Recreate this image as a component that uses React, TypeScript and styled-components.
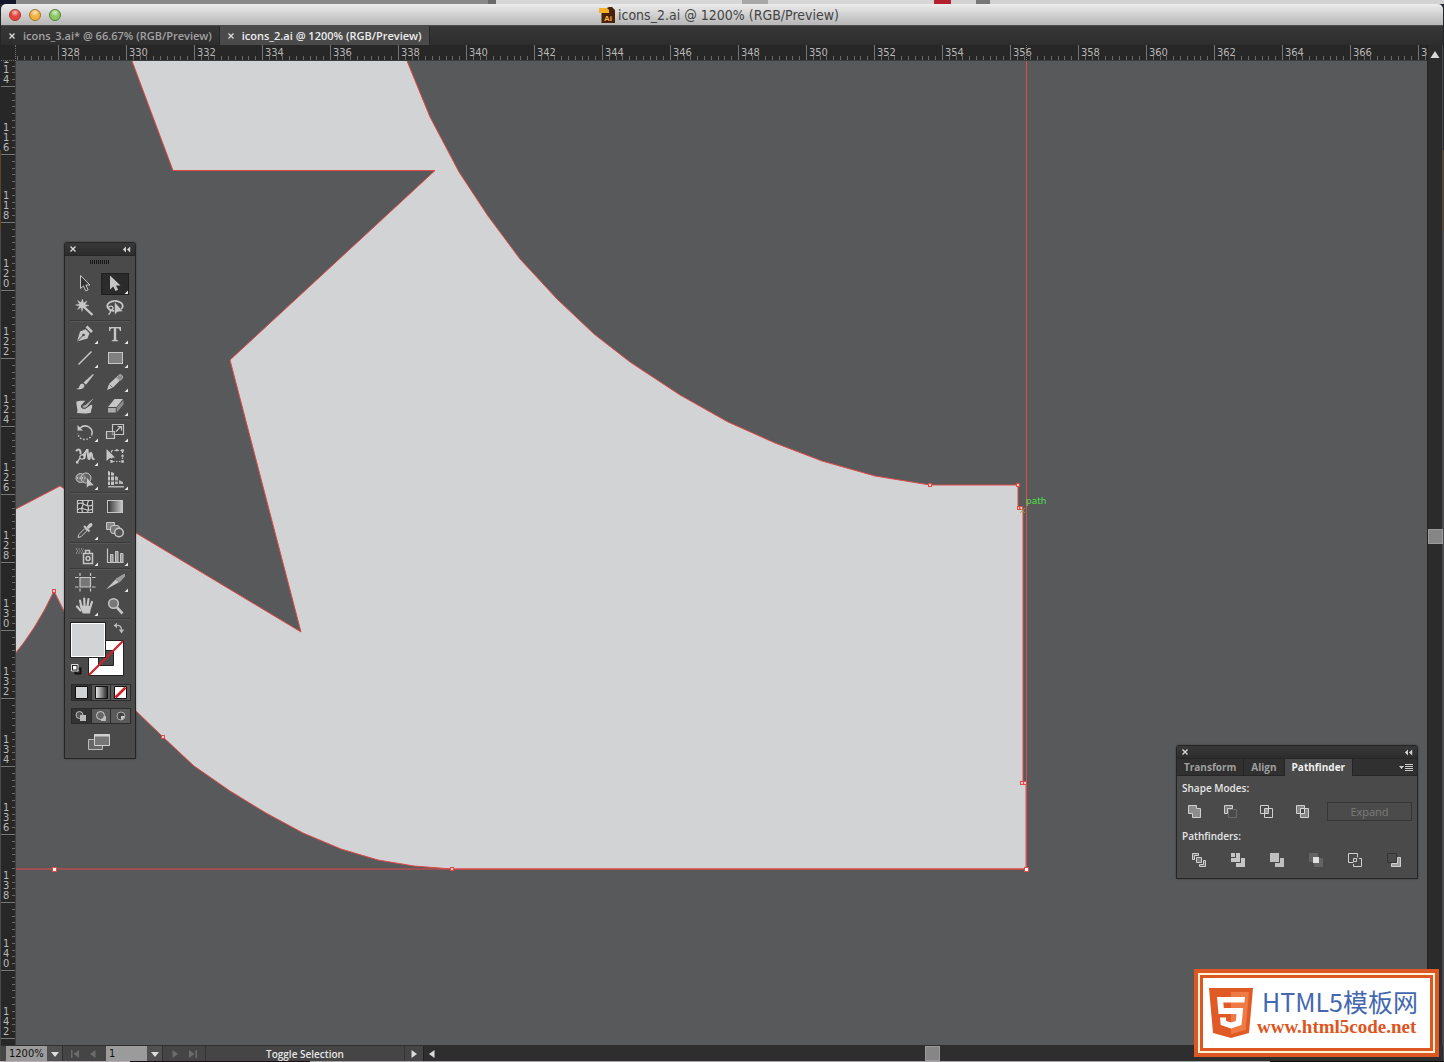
import React from "react";
import styled, { createGlobalStyle, css } from "styled-components";

const uiFont = `"Open Sans", "Noto Sans", sans-serif`;
const rulerFont = `"DejaVu Sans Condensed", "DejaVu Sans", sans-serif`;
const lineRed = "#e04a48";

const GlobalStyle = createGlobalStyle`
  *, *::before, *::after { box-sizing: border-box; }
  html, body { margin: 0; height: 100%; overflow: hidden; }
  body { font-family: ${uiFont}; background: #141416; }
  #root { height: 100%; }
  button, input { font: inherit; margin: 0; }
  svg { display: block; }
`;

/* ---------- window shell ---------- */

const Desktop = styled.div`
  position: relative;
  display: flex;
  flex-direction: column;
  height: 100vh;
  min-height: 800px;
  padding: 0 1px;
  background: linear-gradient(#23262e 0 150px, #5c4322 150px 230px, #4a4a4c 230px);
`;

const BackdropTop = styled.div`
  display: flex;
  flex: none;
  height: 4px;
  margin: 0 -1px;
  background: #d2d2d2;
`;

const BackdropPart = styled.div<{ $w: number; $c: string }>`
  width: ${(p) => p.$w}px;
  background: ${(p) => p.$c};
`;

const BackdropBottom = styled.div`
  flex: none;
  height: 1px;
  margin: 0 -1px;
  background: linear-gradient(90deg, #b8b0b4 0 130px, #1a0d14 130px 310px, #a8a4a8 310px 1270px, #0c0a0a 1270px);
`;

const AppWindow = styled.main`
  flex: 1;
  min-height: 0;
  display: flex;
  flex-direction: column;
  border-radius: 5px 5px 0 0;
  overflow: hidden;
  background: #2a2a2a;
`;

const TitleBar = styled.header`
  position: relative;
  flex: none;
  display: flex;
  align-items: center;
  justify-content: center;
  height: 22px;
  padding-right: 6px;
  background: linear-gradient(#ececec, #b6b6b6);
  border-bottom: 1px solid #4c4c4c;
`;

const Lights = styled.div`
  position: absolute;
  left: 8px;
  top: 5px;
  display: flex;
  gap: 8px;
`;

const Light = styled.button<{ $c: string; $edge: string }>`
  width: 12px;
  height: 12px;
  padding: 0;
  border: 1px solid ${(p) => p.$edge};
  border-radius: 50%;
  background: radial-gradient(circle at 50% 25%, #fff8 0 1px, transparent 4px), ${(p) => p.$c};
`;

const WindowTitle = styled.h1`
  display: flex;
  align-items: center;
  gap: 3px;
  margin: 0;
  font: 400 14px/20px ${rulerFont};
  color: #444;
`;

const TabBar = styled.nav`
  flex: none;
  display: flex;
  height: 19px;
  background: linear-gradient(#373737, #2d2d2d);
`;

const DocTab = styled.div<{ $active?: boolean }>`
  display: flex;
  align-items: center;
  gap: 7px;
  padding: 0 7px;
  border-right: 1px solid #262626;
  color: ${(p) => (p.$active ? "#ececec" : "#a2a2a2")};
  background: ${(p) => (p.$active ? "#4a4a4a" : "transparent")};
`;

const TabName = styled.button`
  padding: 0;
  border: 0;
  background: none;
  color: inherit;
  font: 600 11px/18px ${uiFont};
  white-space: nowrap;
`;

const GlyphButton = styled.button`
  display: grid;
  place-items: center;
  padding: 0;
  border: 0;
  background: none;
  color: #d8d8d8;
`;

const Workspace = styled.div`
  flex: 1;
  min-height: 0;
  display: grid;
  grid-template-columns: 15px minmax(0, 1fr) 16px;
  grid-template-rows: 16px minmax(0, 1fr);
`;

/* ---------- rulers ---------- */

const rulerText = css`
  font-family: ${rulerFont};
  font-size: 11px;
  color: #b9b9b9;
`;

const Corner = styled.div`
  border-right: 1px dotted #707070;
  border-bottom: 1px dotted #707070;
  background: #262626;
`;

const RulerTop = styled.div`
  position: relative;
  display: flex;
  overflow: hidden;
  background: #272727;
  border-bottom: 1px solid #3c3c3c;
`;

const TopCell = styled.div`
  flex: none;
  width: 68px;
  display: flex;
  flex-direction: column;
  justify-content: space-between;
  border-left: 1px solid #767676;
  &:first-child { margin-left: -26px; }
`;

const TopLabel = styled.span`
  ${rulerText}
  padding-left: 2px;
  line-height: 15px;
  height: 11px;
`;

const TopTicks = styled.div`
  display: flex;
  height: 4px;
`;

const TopTick = styled.i`
  flex: 1;
  &:not(:first-child) { border-left: 1px solid #696969; }
`;

const CursorMark = styled.i`
  position: absolute;
  left: 1010px;
  top: 0;
  height: 100%;
  border-left: 1px dotted #777;
`;

const RulerLeft = styled.div`
  display: flex;
  flex-direction: column;
  overflow: hidden;
  background: #272727;
  border-right: 1px solid #3c3c3c;
`;

const LeftCell = styled.div`
  flex: none;
  height: 68px;
  display: flex;
  justify-content: space-between;
  border-bottom: 1px solid #767676;
  &:first-child { margin-top: -42px; }
`;

const LeftLabel = styled.span`
  ${rulerText}
  display: flex;
  flex-direction: column;
  justify-content: flex-end;
  padding: 0 0 1px 2px;
  line-height: 10px;
`;

const LeftTicks = styled.div`
  display: flex;
  flex-direction: column;
  width: 3px;
`;

const LeftTick = styled.i`
  flex: 1;
  &:not(:last-child) { border-bottom: 1px solid #696969; }
`;

/* ---------- scroll bars and canvas ---------- */

const ScrollColumn = styled.div`
  grid-column: 3;
  grid-row: 1 / 3;
  display: flex;
  flex-direction: column;
  align-items: center;
  padding-top: 5px;
  background: #2b2b2b;
  border-left: 1px solid #222;
  border-right: 1px solid #4a4a4a;
`;

const Spacer = styled.i<{ $grow: number }>`
  flex: ${(p) => p.$grow} 1 0;
`;

const Thumb = styled.div`
  flex: none;
  width: 15px;
  height: 15px;
  background: #868686;
  border: 1px solid #9a9a9a;
`;

const Artboard = styled.svg`
  width: 100%;
  height: 100%;
  background: #58595b;
`;

/* ---------- status bar ---------- */

const StatusBar = styled.footer`
  flex: none;
  display: flex;
  height: 16px;
  padding-left: 5px;
  background: #454545;
  border-top: 1px solid #303030;
  color: #e4e4e4;
  font: 600 10px/16px ${uiFont};
`;

const Field = styled.input`
  width: 41px;
  padding: 0 3px;
  border: 0;
  background: #9b9b9b;
  color: #101010;
  font: 400 11px/15px ${rulerFont};
`;

const BarButton = styled(GlyphButton)<{ $w: number; $dim?: boolean }>`
  width: ${(p) => p.$w}px;
  color: ${(p) => (p.$dim ? "#6c6c6c" : "#dcdcdc")};
`;

const DropButton = styled(BarButton)`
  background: #505050;
  border-right: 1px solid #303030;
  margin-right: 3px;
`;

const PageControls = styled.div`
  display: flex;
  margin-left: 4px;
`;

const StatusText = styled.output`
  width: 200px;
  margin-left: 3px;
  border-left: 1px solid #333;
  border-right: 1px solid #333;
  text-align: center;
`;

const ScrollRow = styled.div`
  flex: 1;
  display: flex;
  align-items: center;
  padding-right: 16px;
  background: #2e2e2e;
  border-left: 1px solid #222;
`;

/* ---------- floating panels ---------- */

const Panel = styled.section`
  position: absolute;
  border: 1px solid #242424;
  border-radius: 3px 3px 0 0;
  background: #4a4a4a;
  box-shadow: 0 0 2px #0006;
`;

const PanelHead = styled.div`
  display: flex;
  align-items: center;
  justify-content: space-between;
  height: 13px;
  padding: 0 4px;
  background: linear-gradient(#383838, #2c2c2c);
  border-bottom: 1px solid #262626;
`;

const ToolPanel = styled(Panel)`
  left: 64px;
  top: 242px;
  width: 72px;
`;

const Grip = styled.div`
  height: 16px;
  padding-top: 4px;
  display: flex;
  justify-content: center;
  &::before {
    content: "";
    width: 20px;
    height: 4px;
    background: repeating-linear-gradient(90deg, #141414 0 1px, #4a4a4a 1px 2px);
  }
`;

const ToolGroup = styled.div`
  display: grid;
  grid-template-columns: 30px 30px;
  grid-auto-rows: 24px;
  place-items: center;
  margin: 0 5px 1px;
  border-bottom: 1px solid #3a3a3a;
  box-shadow: 0 1px 0 #565656;
`;

const ToolButton = styled.button<{ $on?: boolean }>`
  width: 28px;
  height: 22px;
  padding: 0;
  border: 0;
  background: ${(p) => (p.$on ? "#2b2b2b" : "none")};
  box-shadow: ${(p) => (p.$on ? "inset 0 0 0 1px #1f1f1f" : "none")};
  color: #c2c2c2;
`;

const SwatchArea = styled.div`
  position: relative;
  height: 64px;
`;

const FillSwatch = styled.button`
  position: absolute;
  left: 5px;
  top: 2px;
  width: 36px;
  height: 36px;
  border: 1px solid #222;
  background: #d1d3d4;
  box-shadow: inset 0 0 0 1px #fff;
`;

const StrokeSwatch = styled.button`
  position: absolute;
  left: 23px;
  top: 20px;
  padding: 0;
  border: 0;
  background: none;
`;

const SwapButton = styled(GlyphButton)`
  position: absolute;
  left: 48px;
  top: 2px;
`;

const DefaultButton = styled(GlyphButton)`
  position: absolute;
  left: 6px;
  top: 44px;
`;

const ModeRow = styled.div`
  display: flex;
  margin: 0 4px 7px 6px;
  border: 1px solid #2a2a2a;
`;

const ModeButton = styled.button<{ $on?: boolean; $plain?: boolean }>`
  flex: 1;
  display: grid;
  place-items: center;
  height: ${(p) => (p.$plain ? 14 : 15)}px;
  padding: 0;
  border: 0;
  background: ${(p) => (p.$on ? "#333" : "#5a5a5a")};
  & + & { border-left: 1px solid #2a2a2a; }
`;

const ScreenMode = styled(GlyphButton)`
  width: 100%;
  height: 27px;
  padding: 0 2px 4px 0;
`;

const PathPanel = styled(Panel)`
  right: 26px;
  top: 745px;
  width: 242px;
`;

const PanelTabs = styled.div`
  display: flex;
  align-items: stretch;
  height: 17px;
  background: #303030;
  border-bottom: 1px solid #262626;
`;

const PanelTab = styled.button<{ $on?: boolean }>`
  padding: 0 7px 1px;
  height: 17px;
  border: 0;
  border-right: 1px solid #242424;
  background: ${(p) => (p.$on ? "#4a4a4a" : "none")};
  color: ${(p) => (p.$on ? "#f0f0f0" : "#9f9f9f")};
  font: 700 10px/15px ${uiFont};
`;

const MenuButton = styled(GlyphButton)`
  margin-left: auto;
  padding-right: 4px;
`;

const PathBody = styled.div`
  padding: 5px 5px 1px;
`;

const PathTitle = styled.h2`
  margin: 0;
  font: 600 10px/14px ${uiFont};
  color: #e6e6e6;
`;

const ModeIcons = styled.div`
  display: flex;
  align-items: center;
  gap: 20px;
  height: 34px;
  padding: 0 0 2px 4px;
`;

const FinderIcons = styled(ModeIcons)`
  gap: 23px;
  padding: 0 0 0 9px;
`;

const PathButton = styled(GlyphButton)`
  width: 16px;
  height: 16px;
`;

const Expand = styled.button`
  flex: 1;
  height: 19px;
  margin-left: -3px;
  padding: 0;
  border: 1px solid #363636;
  background: #4b4b4b;
  color: #7b7b7b;
  font: 400 11px/15px ${uiFont};
`;

/* ---------- site badge ---------- */

const Badge = styled.aside`
  position: absolute;
  right: 5px;
  bottom: 5px;
  width: 245px;
  height: 88px;
  border: 4px solid #dc5722;
  background: #dc5722;
`;

const BadgeInner = styled.div`
  display: flex;
  align-items: center;
  gap: 4px;
  height: 100%;
  padding-left: 9px;
  border: 2px solid #fff3d8;
  background: #fff;
  box-shadow: inset 0 0 0 3px #dc5722;
`;

const BadgeText = styled.div`
  display: flex;
  flex-direction: column;
`;

const BadgeName = styled.strong`
  padding-left: 5px;
  font: 400 25px/27px "Noto Sans CJK SC", sans-serif;
  color: #4468b0;
`;

const BadgeLink = styled.a`
  font: 700 19px/24px "Liberation Serif", serif;
  color: #de5420;
  text-decoration: none;
`;

/* ---------- icons ---------- */

const Cross = () => (
  <svg width="8" height="8" viewBox="0 0 8 8" stroke="currentColor" strokeWidth="1.4">
    <path d="M1.5 1.5l5 5M6.5 1.5l-5 5" />
  </svg>
);

const Collapse = () => (
  <svg width="9" height="7" viewBox="0 0 9 7" fill="#d0d0d0">
    <path d="M4 .5v6L.8 3.5zM8.200 .5v6L5 3.500z" />
  </svg>
);

type Dir = "up" | "down" | "left" | "right" | "first" | "last";
const arrows: Record<Dir, string> = {
  up: "M5 1l4.500 7h-9z",
  down: "M1 3h8L5 8z",
  left: "M7.500 1v8L2 5z",
  right: "M2.500 1v8L8 5z",
  first: "M1 1h1.500v8H1zM9 1v8L3.500 5z",
  last: "M9 1H7.500v8H9zM1 1v8L6.500 5z",
};
const Arrow = ({ dir }: { dir: Dir }) => (
  <svg width="10" height="10" viewBox="0 0 10 10" fill="currentColor">
    <path d={arrows[dir]} />
  </svg>
);

const L = "#c6c6c6";
const line = { fill: "none", stroke: L, strokeWidth: 1.2 };

const toolGroups: { name: string; fly?: boolean; on?: boolean; art: React.ReactNode }[][] = [
  [
    { name: "Selection", art: <path d="M9.500 2.500v13l3-2.700 2.200 5 2.400-1-2.200-4.800h4z" fill="#333" stroke={L} /> },
    { name: "Direct Selection", fly: true, on: true, art: <path d="M9 2.500v14l3.300-3 2.200 4.500 2.600-1.200-2.100-4.300h4.500z" fill={L} /> },
    {
      name: "Magic Wand",
      art: (
        <g stroke={L}>
          <path d="M13 10l8.500 8" strokeWidth="2.400" />
          <path d="M11.500 2l1 4 3.500-2-2 3.500 4 1-4 1 1.500 3-3.500-2-1 4-1-4-3.500 2 2-3.500-4-1 4-1-2-3.500 3.500 2z" fill={L} strokeWidth=".4" />
        </g>
      ),
    },
    {
      name: "Lasso",
      art: (
        <g>
          <ellipse cx="14" cy="9" rx="7.800" ry="5" {...line} strokeWidth="1.800" />
          <path d="M7 11c2-3 5-2 5 0s-3 3-4 1M9.500 14c0 2-1 3-2 3.500" {...line} strokeWidth="1.400" />
          <path d="M13.500 4.500v13.500l3-3 5.500-.5z" fill={L} stroke="#4a4a4a" strokeWidth=".6" />
        </g>
      ),
    },
  ],
  [
    {
      name: "Pen",
      fly: true,
      art: (
        <g>
          <path d="M6 18.500l3-10 5.500-2.300 4 4-2 5.300z" fill={L} />
          <path d="M6 18.500l6-6" stroke="#444" />
          <circle cx="12.500" cy="12" r="1.300" fill="#444" />
          <path d="M15.500 3.500l5.500 5.500" stroke={L} strokeWidth="2.600" />
        </g>
      ),
    },
    { name: "Type", fly: true, art: <path d="M8 4h12v4h-1c-.4-2-1-2.700-3-2.700h-.8V16c0 1 .4 1.300 2 1.300v.9h-6.400v-.9c1.600 0 2-.3 2-1.300V5.300H12c-2 0-2.600.7-3 2.700H8z" fill={L} /> },
    { name: "Line Segment", fly: true, art: <path d="M7.500 17.500l13-13" {...line} strokeWidth="1.500" /> },
    { name: "Rectangle", fly: true, art: <rect x="7.500" y="5.500" width="14" height="11" fill="#808080" stroke={L} /> },
    {
      name: "Paintbrush",
      art: (
        <g fill={L}>
          <path d="M5 18c3-.2 3-2 4-4 1-1.800 3.500-1.500 4.300.2C14 17 10 19 5 18z" />
          <path d="M12.500 11.500L22 3l.8.700-7.800 10z" />
        </g>
      ),
    },
    {
      name: "Pencil",
      fly: true,
      art: (
        <g>
          <path d="M6 19l2-6L15 6.500l3.500 3.500-6.500 6.500z" fill={L} />
          <path d="M15.600 6.400l2-2c1-1 2.300-1 3.300 0s1 2.200 0 3.300l-2 2z" fill="#8b8b8b" stroke={L} strokeWidth=".8" />
          <path d="M8.500 13.500l3 3" stroke="#555" strokeWidth=".8" />
        </g>
      ),
    },
    {
      name: "Blob Brush",
      art: (
        <g>
          <path d="M5.500 6.500c3-1.500 7-.5 9-1l-4.500 5c-.5 2.500 2 4 4.500 3l6-4c2 2-.5 4-.5 8-4 1.500-9 1-14 .5 1.500-3.500-1-7-.5-11.500z" fill={L} />
          <path d="M11 12.500c0-2 2-2.500 3.500-3L22 3l.7.800-6.200 8c-2 2-4 1.500-5.500.7z" fill="#aaa" stroke="#3d3d3d" strokeWidth=".8" />
        </g>
      ),
    },
    {
      name: "Eraser",
      fly: true,
      art: (
        <g>
          <path d="M13.500 4H22l-6.500 8H7z" fill={L} />
          <path d="M7 13h7.800v4.500H7z" fill="#aaa" />
          <path d="M15.800 12.500L22.500 5v4.500l-6.700 8z" fill="#8b8b8b" />
        </g>
      ),
    },
  ],
  [
    {
      name: "Rotate",
      fly: true,
      art: (
        <g>
          <path d="M9 7c6-5 13 0 12 6" {...line} strokeWidth="1.500" />
          <path d="M21 13c-2 8-14 7-14-1" {...line} strokeWidth="1.500" strokeDasharray="1.500 1.800" />
          <path d="M6.500 4v5.500H12z" fill={L} />
        </g>
      ),
    },
    {
      name: "Scale",
      fly: true,
      art: (
        <g {...line}>
          <path d="M11.500 3.500h11v10h-11z" fill="#444" />
          <path d="M5.500 10.500h8v7h-8z" fill="#6b6b6b88" />
          <path d="M15 10.500l5-5M16.500 5.500h4v4" />
        </g>
      ),
    },
    {
      name: "Width",
      fly: true,
      art: (
        <g>
          <path d="M5 6c3-3 5-1 4.500 3M13 14c2-6 1-8 3-8s0 8 2 8 0-7 2-6 0 7 3.500 6" {...line} strokeWidth="2" />
          <path d="M6 17L16 5" {...line} />
          <circle cx="11" cy="12" r="2.200" fill="#444" stroke="#eee" />
          <path d="M5 16h2.500v2.500H5zM15 4h2.500v2.500H15z" fill={L} />
        </g>
      ),
    },
    {
      name: "Free Transform",
      art: (
        <g>
          <path d="M10.500 5.500h11v11h-11z" {...line} strokeDasharray="1.500 1.500" />
          <path d="M5.500 4v12l3.500-3 5-.5z" fill={L} />
          <path d="M20.300 4.300h2.500v2.500h-2.500zM20.300 15.300h2.500v2.500h-2.500zM9.300 15.300h2.500v2.500H9.300zM14.800 4.300h2v2h-2zM20.500 10h2v2h-2z" fill={L} />
        </g>
      ),
    },
    {
      name: "Shape Builder",
      fly: true,
      art: (
        <g>
          <circle cx="9.500" cy="9" r="4.500" fill="#777" stroke={L} />
          <circle cx="15" cy="9" r="5" fill="#7779" stroke={L} />
          <path d="M6 9h10" stroke="#fff" strokeDasharray="1 1.500" />
          <path d="M15.500 8v11l2.600-2.200 4.900-.3z" fill={L} stroke="#444" strokeWidth=".4" />
        </g>
      ),
    },
    {
      name: "Perspective Grid",
      fly: true,
      art: (
        <g>
          <path d="M7 2l6 2v12H7z" fill={L} />
          <path d="M14 7l3 1v7h-3zM18 11l4 2v2h-4zM7 17h16v1.500H7z" fill="#b4b4b4" />
          <path d="M9.500 2v14M7 7h6M7 12h11" stroke="#444" />
        </g>
      ),
    },
  ],
  [
    {
      name: "Mesh",
      art: (
        <g {...line}>
          <path d="M6.500 5.500h15v12h-15z" fill="#3a3a3a" />
          <path d="M6.500 9c6-4 8 5 15 1M6.500 15c5-5 9 3 15-1M11 5.500c4 4-3 7 1 12M18 5.500c-5 5 3 7-2 12" />
        </g>
      ),
    },
    { name: "Gradient", art: <rect x="6.500" y="5.500" width="15" height="12" fill="url(#toolGrad)" stroke={L} /> },
    {
      name: "Eyedropper",
      fly: true,
      art: (
        <g>
          <path d="M7 18.500l.8-3 6-6 2.200 2.200-6 6z" fill="none" stroke={L} />
          <path d="M13 7l5.500 5.500" stroke={L} strokeWidth="2" />
          <path d="M15.500 8l3-3.500c2-1.500 4 .5 2.500 2.500L17.800 10z" fill={L} />
        </g>
      ),
    },
    {
      name: "Blend",
      art: (
        <g stroke={L}>
          <path d="M5.500 3.500h8v7h-8z" fill="#888" />
          <rect x="9.500" y="6.500" width="9" height="8" rx="2.500" fill="#777" />
          <circle cx="18" cy="13.500" r="4.300" fill="#555" strokeWidth="1.500" />
        </g>
      ),
    },
  ],
  [
    {
      name: "Symbol Sprayer",
      fly: true,
      art: (
        <g>
          <path d="M12.500 8.500h9v10h-9zM14.500 5.500h4v3h-4z" {...line} strokeWidth="1.500" />
          <circle cx="17" cy="13.500" r="2" fill="none" stroke={L} strokeWidth="1.500" />
          <path d="M5 4h8M6 6h7M5 8h6" stroke={L} strokeDasharray="1 1.500" />
        </g>
      ),
    },
    {
      name: "Column Graph",
      fly: true,
      art: (
        <g>
          <path d="M6.500 3.500v14h16" {...line} />
          <path d="M9.500 9.500h2.500v8H9.500zM14.500 6.500H17v11h-2.500zM19.500 8.500H22v9h-2.500z" fill="#999" stroke={L} />
        </g>
      ),
    },
  ],
  [
    {
      name: "Artboard",
      art: (
        <g {...line}>
          <path d="M9 6.500h10.500v9.500H9z" fill="#777" />
          <path d="M9 2v3M19.500 2v3M9 17.500v3M19.500 17.500v3M4 6.500h3.500M21 6.500h3.500M4 16h3.500M21 16h3.500" />
        </g>
      ),
    },
    {
      name: "Slice",
      fly: true,
      art: (
        <g>
          <path d="M5 18.500l9.500-10 3.500 2.800z" fill={L} />
          <path d="M15 8L23.500 3v2.500L18.500 11z" fill="#999" stroke={L} strokeWidth=".5" />
        </g>
      ),
    },
    {
      name: "Hand",
      fly: true,
      art: (
        <g fill="none" stroke={L} strokeWidth="2.200" strokeLinecap="round">
          <path d="M10.500 12L9 5.500M13.500 11l-.3-7.500M16.500 11l1-7M19 13l2-6M9.500 15.500L6 11.500" />
          <path d="M10 11.500l9 .5-1 5.500h-5.500z" fill={L} />
        </g>
      ),
    },
    {
      name: "Zoom",
      art: (
        <g>
          <circle cx="12.500" cy="8.500" r="4.800" fill="#777" stroke={L} strokeWidth="1.500" />
          <path d="M16 12.500l5.500 6" stroke={L} strokeWidth="2.600" />
        </g>
      ),
    },
  ],
];

const ToolIcon = ({ art, fly }: { art: React.ReactNode; fly?: boolean }) => (
  <svg width="28" height="22" viewBox="0 0 28 22" fill="none">
    {art}
    {fly && <path d="M27 17.500V21h-3.500z" fill="#e8e8e8" />}
  </svg>
);

const light = { fill: "#a0a0a0", stroke: "#d0d0d0" };
const hollow = { fill: "none", stroke: "#d0d0d0" };

const shapeModes = [
  { name: "Unite", art: <path d="M2.500 2.500h8v3h4v9h-8v-4h-4z" {...light} fill="#8c8c8c" /> },
  { name: "Minus Front", art: <g><path d="M6.500 6.500h8v8h-8z" fill="none" stroke="#6a6a6a" /><path d="M2.500 10.500v-8h8v3h-5v5z" {...light} fill="#777" /></g> },
  { name: "Intersect", art: <g><path d="M6.500 5.500h4v5h-4z" fill="#999" /><path d="M2.500 2.500h8v8h-8zM6.500 5.500h8v9h-8z" {...hollow} /></g> },
  { name: "Exclude", art: <g><path d="M2.500 2.500h8v8h-8zM6.500 5.500h8v9h-8z" {...light} fill="#858585" /><path d="M6.500 5.500h4v5h-4z" fill="#444" stroke="#ddd" /></g> },
];

const pathfinders = [
  { name: "Divide", art: <g><path d="M1.500 7.500v-6h6v2h-4v4zM14.500 8.500v6h-6v-2h4v-4z" {...light} fill="#777" /><path d="M5.500 5.500h5v5h-5z" fill="#777" stroke="#d0d0d0" /></g> },
  { name: "Trim", art: <g fill="#c6c6c6"><path d="M1 1h4v4H1zM6 1h4v9H1V6h5z" /><path d="M11 6h4v9H6v-4h5z" /></g> },
  { name: "Merge", art: <g fill="#c0c0c0"><path d="M1 1h9v9H1z" /><path d="M11 6h4v9H6v-4h5z" /></g> },
  { name: "Crop", art: <g><path d="M1 1h9v4H6v5H1zM11 6h4v9H6v-4h5z" fill="#646464" /><path d="M5 5h6v6H5z" fill="#e0e0e0" /></g> },
  { name: "Outline", art: <g {...hollow}><path d="M6.500 10.500h-5v-9h9v4" /><path d="M6.500 6.500h3v3h-3zM12 6.500h2.500v8h-8V12" /></g> },
  { name: "Minus Back", art: <g><path d="M1.500 1.500h9v9h-9z" fill="none" stroke="#333" /><path d="M11.500 5.500h3v9h-9v-3h6z" {...light} /></g> },
];

const Glyph = ({ children }: { children: React.ReactNode }) => (
  <svg width="16" height="16" viewBox="0 0 16 16">{children}</svg>
);

/* ---------- artwork ---------- */

const outline =
  "M132 55V61L173 170.500H435L230 360L301 632L136 533L60 486L10 512V660Q36 630 54 591Q80 650 136 711L163 737L194 766L230 791L266 813L303 833L341 849L378 860L414 866L452 869H1026V783H1023V508H1018V485H930L875 476L822 461L775 443L728 422L680 395L630 362L594 334L557 299L520 259L488 216L459 172L430 117L407 61V55Z";

const anchors: [number, number, boolean?][] = [
  [54, 591], [163, 737], [452, 869], [930, 485], [1018, 485], [1019, 508],
  [1021, 508], [1022, 783], [1025, 783], [1026, 869, true], [54, 869, true],
];

const Drawing = () => (
  <Artboard role="img" aria-label="Zoomed vector artwork">
    <g transform="translate(-16 -61)">
      <path d={outline} fill="#d1d3d4" stroke={lineRed} />
      <path d="M1026.500 55V869M10 869H1026" stroke={lineRed} fill="none" />
      {anchors.map(([x, y, white]) => (
        <rect key={`${x}-${y}`} x={x - 1.500} y={y - 1.500} width={white ? 4 : 3} height={white ? 4 : 3} fill={white ? "#fff" : "#f3c9c7"} stroke={lineRed} />
      ))}
      <path d="M1020 508l5 5M1025 508l-5 5" stroke="#8fae4a" strokeWidth=".8" />
      <text x="1026" y="504" fill="#4fe04a" fontSize="9" fontFamily="DejaVu Sans">path</text>
    </g>
  </Artboard>
);

const Html5Logo = () => (
  <svg width="44" height="50" viewBox="0 0 44 50">
    <path d="M0 0h44l-4 45-18 5-18-5z" fill="#e05a26" />
    <path d="M22 4h18l-3.400 38L22 46z" fill="#ef7a45" />
    <path d="M36 9H8l1.500 17h18l-.7 7-4.800 1.500-4.800-1.500-.3-3.500H11l.7 7.500L22 40.500 32.500 37l1.700-17H14.800l-.5-5.500h21.200z" fill="#fff" />
  </svg>
);

const topMarks = Array.from({ length: 22 }, (_, i) => 326 + i * 2);
const leftMarks = Array.from({ length: 15 }, (_, i) => 114 + i * 2);
const tens = Array.from({ length: 10 }, (_, i) => i);

export default function App() {
  return (
    <Desktop>
      <GlobalStyle />
      <BackdropTop>
        <BackdropPart $w={16} $c="#14172b" />
        <BackdropPart $w={472} $c="#8a8a8a" />
        <BackdropPart $w={8} $c="#6a6a6a" />
        <BackdropPart $w={246} $c="#d6d6d6" />
        <BackdropPart $w={26} $c="#a8a8a8" />
        <BackdropPart $w={166} $c="#d6d6d6" />
        <BackdropPart $w={17} $c="#b3202f" />
        <BackdropPart $w={25} $c="#d2d2d2" />
        <BackdropPart $w={14} $c="#777" />
      </BackdropTop>

      <AppWindow>
        <TitleBar>
          <Lights>
            <Light $c="#e8443e" $edge="#9c3a35" aria-label="Close window" />
            <Light $c="#f3b13c" $edge="#9c7430" aria-label="Minimize window" />
            <Light $c="#8bc860" $edge="#4f7d3c" aria-label="Zoom window" />
          </Lights>
          <WindowTitle>
            <svg width="16" height="16" viewBox="0 0 16 16">
              <path d="M0 1h8l2-1h3l3 3v13H2.500V6H0z" fill="#4a2208" />
              <path d="M0 1h8l2 2v3H0z" fill="#f3b229" />
              <text x="5" y="14" fontSize="8" fontWeight="700" fontFamily="Liberation Sans" fill="#f5b942">Ai</text>
            </svg>
            icons_2.ai @ 1200% (RGB/Preview)
          </WindowTitle>
        </TitleBar>

        <TabBar>
          <DocTab>
            <GlyphButton aria-label="Close icons_3.ai"><Cross /></GlyphButton>
            <TabName>icons_3.ai* @ 66.67% (RGB/Preview)</TabName>
          </DocTab>
          <DocTab $active>
            <GlyphButton aria-label="Close icons_2.ai"><Cross /></GlyphButton>
            <TabName>icons_2.ai @ 1200% (RGB/Preview)</TabName>
          </DocTab>
        </TabBar>

        <Workspace>
          <Corner />
          <RulerTop>
            {topMarks.map((n, i) => (
              <TopCell key={n}>
                <TopLabel>{i > 0 && n}</TopLabel>
                <TopTicks>{tens.map((t) => <TopTick key={t} />)}</TopTicks>
              </TopCell>
            ))}
            <CursorMark />
          </RulerTop>
          <RulerLeft>
            {leftMarks.map((n) => (
              <LeftCell key={n}>
                <LeftLabel>{String(n).split("").map((d, i) => <span key={i}>{d}</span>)}</LeftLabel>
                <LeftTicks>{tens.map((t) => <LeftTick key={t} />)}</LeftTicks>
              </LeftCell>
            ))}
          </RulerLeft>
          <Drawing />
          <ScrollColumn>
            <GlyphButton aria-label="Scroll up"><Arrow dir="up" /></GlyphButton>
            <Spacer $grow={469} />
            <Thumb />
            <Spacer $grow={500} />
          </ScrollColumn>
        </Workspace>

        <StatusBar>
          <Field aria-label="Zoom level" defaultValue="1200%" />
          <DropButton $w={16} aria-label="Zoom presets"><Arrow dir="down" /></DropButton>
          <BarButton $w={18} $dim aria-label="First artboard"><Arrow dir="first" /></BarButton>
          <BarButton $w={18} $dim aria-label="Previous artboard"><Arrow dir="left" /></BarButton>
          <PageControls>
            <Field aria-label="Artboard number" defaultValue="1" />
            <DropButton $w={16} aria-label="Artboard list"><Arrow dir="down" /></DropButton>
            <BarButton $w={18} $dim aria-label="Next artboard"><Arrow dir="right" /></BarButton>
            <BarButton $w={18} $dim aria-label="Last artboard"><Arrow dir="last" /></BarButton>
          </PageControls>
          <StatusText>Toggle Selection</StatusText>
          <BarButton $w={18} aria-label="Status menu"><Arrow dir="right" /></BarButton>
          <ScrollRow>
            <BarButton $w={16} aria-label="Scroll left"><Arrow dir="left" /></BarButton>
            <Spacer $grow={485} />
            <Thumb />
            <Spacer $grow={488} />
          </ScrollRow>
        </StatusBar>
      </AppWindow>
      <BackdropBottom />

      <ToolPanel aria-label="Tools">
        <PanelHead>
          <GlyphButton aria-label="Close tools"><Cross /></GlyphButton>
          <GlyphButton aria-label="Collapse tools"><Collapse /></GlyphButton>
        </PanelHead>
        <Grip />
        {toolGroups.map((group) => (
          <ToolGroup key={group[0].name}>
            {group.map((t) => (
              <ToolButton key={t.name} $on={t.on} aria-label={t.name}>
                <ToolIcon art={t.art} fly={t.fly} />
              </ToolButton>
            ))}
          </ToolGroup>
        ))}
        <SwatchArea>
          <StrokeSwatch aria-label="Stroke: none">
            <svg width="36" height="36" viewBox="0 0 36 36">
              <linearGradient id="toolGrad"><stop stopColor="#333" /><stop offset="1" stopColor="#ccc" /></linearGradient>
              <linearGradient id="modeGrad"><stop stopColor="#eee" /><stop offset="1" stopColor="#222" /></linearGradient>
              <path d="M.5.5h35v35H.5z" fill="#fff" stroke="#222" />
              <path d="M10.500 10.500h15v15h-15z" fill="#4a4a4a" stroke="#222" />
              <path d="M1 35L35 1" stroke="#d0202a" strokeWidth="2.200" />
            </svg>
          </StrokeSwatch>
          <FillSwatch aria-label="Fill" />
          <SwapButton aria-label="Swap fill and stroke">
            <svg width="12" height="12" viewBox="0 0 12 12">
              <path d="M3 3.500c4-.5 5.500 1 5.500 5" fill="none" stroke="#b8b8b8" strokeWidth="1.300" />
              <path d="M4 .8v5.400L.5 3.500zM5.800 7.500h5.400L8.500 11.500z" fill="#b8b8b8" />
            </svg>
          </SwapButton>
          <DefaultButton aria-label="Default fill and stroke">
            <svg width="11" height="11" viewBox="0 0 11 11">
              <path d="M4.500 4.500h5v5h-5z" fill="#4a4a4a" stroke="#111" strokeWidth="2" />
              <path d="M.5.500h6.500v6.500H.5z" fill="#222" stroke="#ddd" />
              <path d="M2 2h3.500v3.500H2z" fill="#fff" />
            </svg>
          </DefaultButton>
        </SwatchArea>
        <ModeRow>
          <ModeButton $on aria-label="Color">
            <svg width="13" height="13"><path d="M.5.500h12v12H.5z" fill="#d1d3d4" stroke="#111" /></svg>
          </ModeButton>
          <ModeButton aria-label="Gradient fill">
            <svg width="13" height="13"><path d="M.5.500h12v12H.5z" fill="url(#modeGrad)" stroke="#111" /></svg>
          </ModeButton>
          <ModeButton aria-label="No fill">
            <svg width="13" height="13"><path d="M.5.500h12v12H.5z" fill="#fff" stroke="#111" /><path d="M1.500 11.500l10-10" stroke="#d0202a" strokeWidth="2.600" /></svg>
          </ModeButton>
        </ModeRow>
        <ModeRow>
          <ModeButton $plain $on aria-label="Draw normal">
            <svg width="12" height="12"><circle cx="4.500" cy="5" r="3.500" fill="#555" stroke="#bbb" /><path d="M5 5h6v6H5z" fill="#bbb" /></svg>
          </ModeButton>
          <ModeButton $plain aria-label="Draw behind">
            <svg width="12" height="12"><path d="M6 6h5v5H6z" fill="#bbb" /><circle cx="5.500" cy="5.500" r="4" fill="#666" stroke="#ccc" /></svg>
          </ModeButton>
          <ModeButton $plain aria-label="Draw inside">
            <svg width="12" height="12"><circle cx="6" cy="6" r="4" fill="#444" stroke="#aaa" /><path d="M6 6h4l-2 3-2 1z" fill="#ccc" /></svg>
          </ModeButton>
        </ModeRow>
        <ScreenMode aria-label="Screen mode">
          <svg width="22" height="17" viewBox="0 0 22 17">
            <path d="M.5 5.500h14v10H.5z" fill="#666" stroke="#bbb" />
            <path d="M6.500.500h15v11h-15z" fill="#777" stroke="#d0d0d0" />
            <path d="M6.500 1.500h15" stroke="#d0d0d0" strokeWidth="2" />
          </svg>
        </ScreenMode>
      </ToolPanel>

      <PathPanel aria-label="Pathfinder">
        <PanelHead>
          <GlyphButton aria-label="Close panel"><Cross /></GlyphButton>
          <GlyphButton aria-label="Collapse panel"><Collapse /></GlyphButton>
        </PanelHead>
        <PanelTabs>
          <PanelTab>Transform</PanelTab>
          <PanelTab>Align</PanelTab>
          <PanelTab $on>Pathfinder</PanelTab>
          <MenuButton aria-label="Panel menu">
            <svg width="14" height="9" viewBox="0 0 14 9" fill="#ccc">
              <path d="M0 3h5L2.500 6zM6 1h8v1H6zM6 3h8v1H6zM6 5h8v1H6zM6 7h8v1H6z" />
            </svg>
          </MenuButton>
        </PanelTabs>
        <PathBody>
          <PathTitle>Shape Modes:</PathTitle>
          <ModeIcons>
            {shapeModes.map((m) => <PathButton key={m.name} aria-label={m.name}><Glyph>{m.art}</Glyph></PathButton>)}
            <Expand disabled>Expand</Expand>
          </ModeIcons>
          <PathTitle>Pathfinders:</PathTitle>
          <FinderIcons>
            {pathfinders.map((m) => <PathButton key={m.name} aria-label={m.name}><Glyph>{m.art}</Glyph></PathButton>)}
          </FinderIcons>
        </PathBody>
      </PathPanel>

      <Badge>
        <BadgeInner>
          <Html5Logo />
          <BadgeText>
            <BadgeName>HTML5模板网</BadgeName>
            <BadgeLink href="#">www.html5code.net</BadgeLink>
          </BadgeText>
        </BadgeInner>
      </Badge>
    </Desktop>
  );
}
